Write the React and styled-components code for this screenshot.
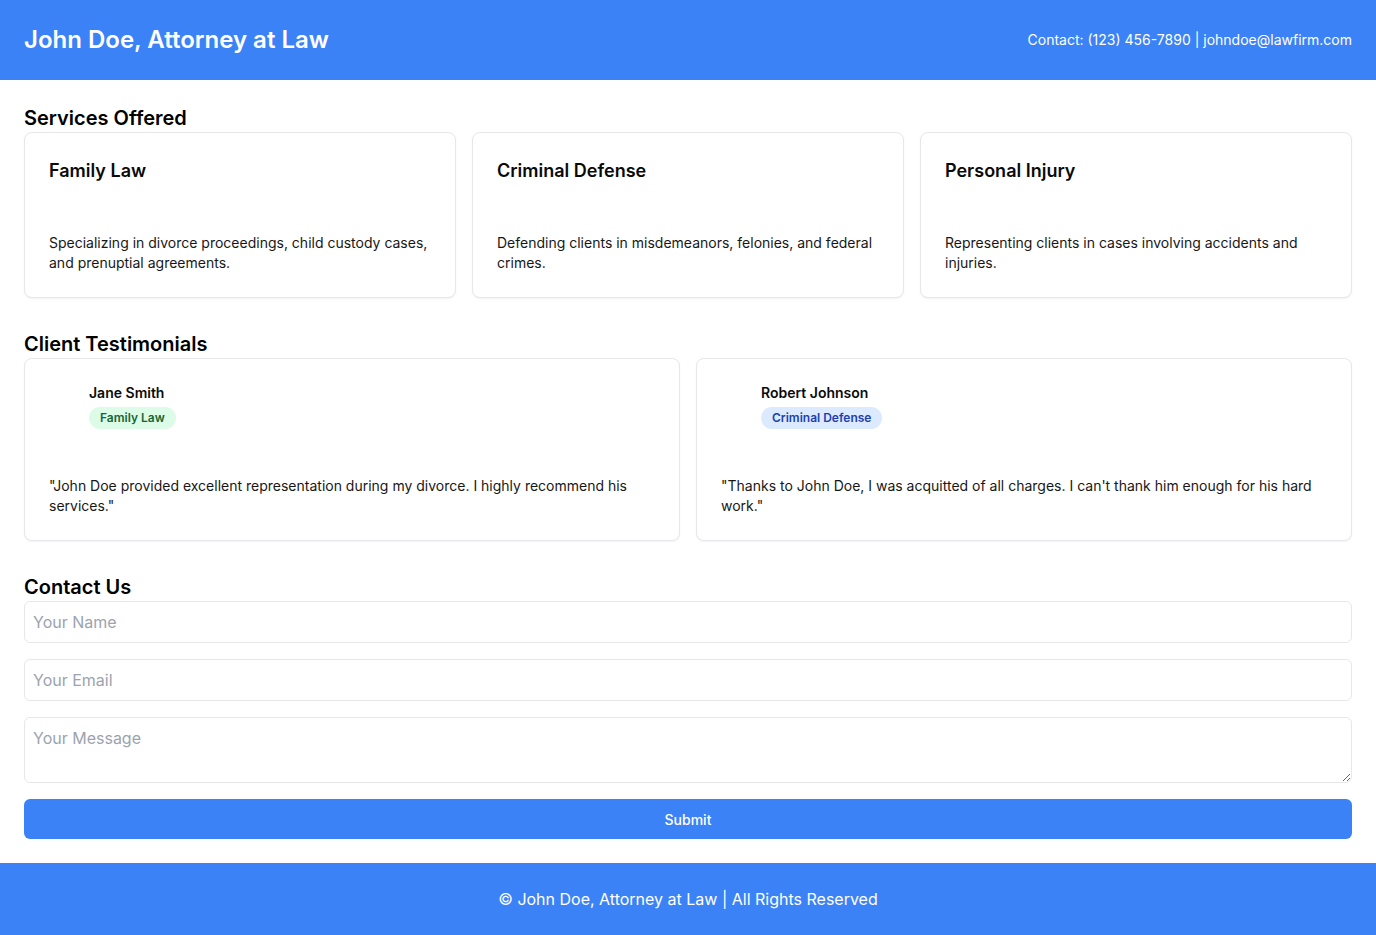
import React from "react";
import styled, { createGlobalStyle } from "styled-components";

const Global = createGlobalStyle`
  * { box-sizing: border-box; }
  html, body { margin: 0; padding: 0; background: #ffffff; }
  body { font-family: Inter, "Noto Sans", sans-serif; color: #0a0a0a; -webkit-font-smoothing: antialiased; }
`;

const Page = styled.div`
  min-height: 100vh;
  display: flex;
  flex-direction: column;
`;

const Header = styled.header`
  background: #3b82f6;
  color: #ffffff;
  height: 80px;
  padding: 0 24px;
  display: flex;
  align-items: center;
  justify-content: space-between;
`;

const SiteTitle = styled.h1`
  margin: 0;
  font-size: 24px;
  line-height: 32px;
  font-weight: 600;
`;

const ContactLine = styled.p`
  margin: 0;
  font-size: 14px;
  line-height: 20px;
`;

const Main = styled.main`
  padding: 24px;
  display: flex;
  flex-direction: column;
  gap: 32px;
`;

const Section = styled.section`
  display: flex;
  flex-direction: column;
`;

const SectionTitle = styled.h2`
  margin: 0;
  font-size: 20px;
  line-height: 28px;
  font-weight: 600;
  color: #000;
`;

const Grid = styled.div`
  display: grid;
  grid-template-columns: repeat(${(p) => p.$cols}, 1fr);
  gap: 16px;
`;

const Card = styled.div`
  border: 1px solid #e5e7eb;
  border-radius: 8px;
  background: #fff;
  box-shadow: 0 1px 2px rgba(0, 0, 0, 0.05);
  padding: 24px;
  display: flex;
  flex-direction: column;
`;

const CardTitle = styled.h3`
  margin: 0;
  font-size: 18px;
  line-height: 28px;
  font-weight: 600;
  color: #0a0a0a;
`;

const CardText = styled.p`
  margin: ${(p) => p.$top}px 0 0;
  font-size: 14px;
  line-height: 20px;
  color: #171717;
`;

const Person = styled.div`
  display: flex;
  align-items: flex-start;
`;

const AvatarSlot = styled.div`
  width: 40px;
  height: 40px;
  flex-shrink: 0;
`;

const PersonInfo = styled.div`
  display: flex;
  flex-direction: column;
  align-items: flex-start;
  gap: 4px;
`;

const Name = styled.span`
  font-size: 14px;
  line-height: 20px;
  font-weight: 600;
  color: #0a0a0a;
`;

const Badge = styled.span`
  display: inline-flex;
  align-items: center;
  height: 22px;
  padding: 0 11px;
  border-radius: 999px;
  font-size: 12px;
  line-height: 16px;
  font-weight: 600;
  background: ${(p) => (p.$tone === "green" ? "#dcfce7" : "#dbeafe")};
  color: ${(p) => (p.$tone === "green" ? "#166534" : "#1e40af")};
`;

const Form = styled.form`
  display: flex;
  flex-direction: column;
  gap: 16px;
`;

const Input = styled.input`
  height: 42px;
  width: 100%;
  border: 1px solid #e5e7eb;
  border-radius: 6px;
  padding: 0 8px;
  font-family: Inter, "Noto Sans", sans-serif;
  font-size: 16px;
  color: #0a0a0a;
  background: #fff;
  outline: none;
  &::placeholder { color: #9ca3af; }
`;

const TextArea = styled.textarea`
  height: 66px;
  width: 100%;
  border: 1px solid #e5e7eb;
  border-radius: 6px;
  padding: 8px 8px;
  font-family: Inter, "Noto Sans", sans-serif;
  font-size: 16px;
  line-height: 24px;
  color: #0a0a0a;
  background: #fff;
  outline: none;
  resize: vertical;
  display: block;
  &::placeholder { color: #9ca3af; }
`;

const Submit = styled.button`
  height: 40px;
  width: 100%;
  border: none;
  border-radius: 6px;
  background: #3b82f6;
  color: #fff;
  font-family: Inter, "Noto Sans", sans-serif;
  font-size: 14px;
  font-weight: 500;
  cursor: pointer;
`;

const Footer = styled.footer`
  background: #3b82f6;
  color: #fff;
  padding: 24px;
  text-align: center;
  font-size: 16px;
  line-height: 24px;
`;

const services = [
  {
    title: "Family Law",
    text: "Specializing in divorce proceedings, child custody cases, and prenuptial agreements.",
  },
  {
    title: "Criminal Defense",
    text: "Defending clients in misdemeanors, felonies, and federal crimes.",
  },
  {
    title: "Personal Injury",
    text: "Representing clients in cases involving accidents and injuries.",
  },
];

const testimonials = [
  {
    name: "Jane Smith",
    tag: "Family Law",
    tone: "green",
    quote:
      "\"John Doe provided excellent representation during my divorce. I highly recommend his services.\"",
  },
  {
    name: "Robert Johnson",
    tag: "Criminal Defense",
    tone: "blue",
    quote:
      "\"Thanks to John Doe, I was acquitted of all charges. I can't thank him enough for his hard work.\"",
  },
];

export default function App() {
  return (
    <Page>
      <Global />
      <Header>
        <SiteTitle>John Doe, Attorney at Law</SiteTitle>
        <ContactLine>Contact: (123) 456-7890 | johndoe@lawfirm.com</ContactLine>
      </Header>
      <Main>
        <Section>
          <SectionTitle>Services Offered</SectionTitle>
          <Grid $cols={3}>
            {services.map((s) => (
              <Card key={s.title}>
                <CardTitle>{s.title}</CardTitle>
                <CardText $top={48}>{s.text}</CardText>
              </Card>
            ))}
          </Grid>
        </Section>
        <Section>
          <SectionTitle>Client Testimonials</SectionTitle>
          <Grid $cols={2}>
            {testimonials.map((t) => (
              <Card key={t.name}>
                <Person>
                  <AvatarSlot />
                  <PersonInfo>
                    <Name>{t.name}</Name>
                    <Badge $tone={t.tone}>{t.tag}</Badge>
                  </PersonInfo>
                </Person>
                <CardText $top={47}>{t.quote}</CardText>
              </Card>
            ))}
          </Grid>
        </Section>
        <Section>
          <SectionTitle>Contact Us</SectionTitle>
          <Form onSubmit={(e) => e.preventDefault()}>
            <Input placeholder="Your Name" />
            <Input placeholder="Your Email" />
            <TextArea placeholder="Your Message" />
            <Submit type="submit">Submit</Submit>
          </Form>
        </Section>
      </Main>
      <Footer>© John Doe, Attorney at Law | All Rights Reserved</Footer>
    </Page>
  );
}
